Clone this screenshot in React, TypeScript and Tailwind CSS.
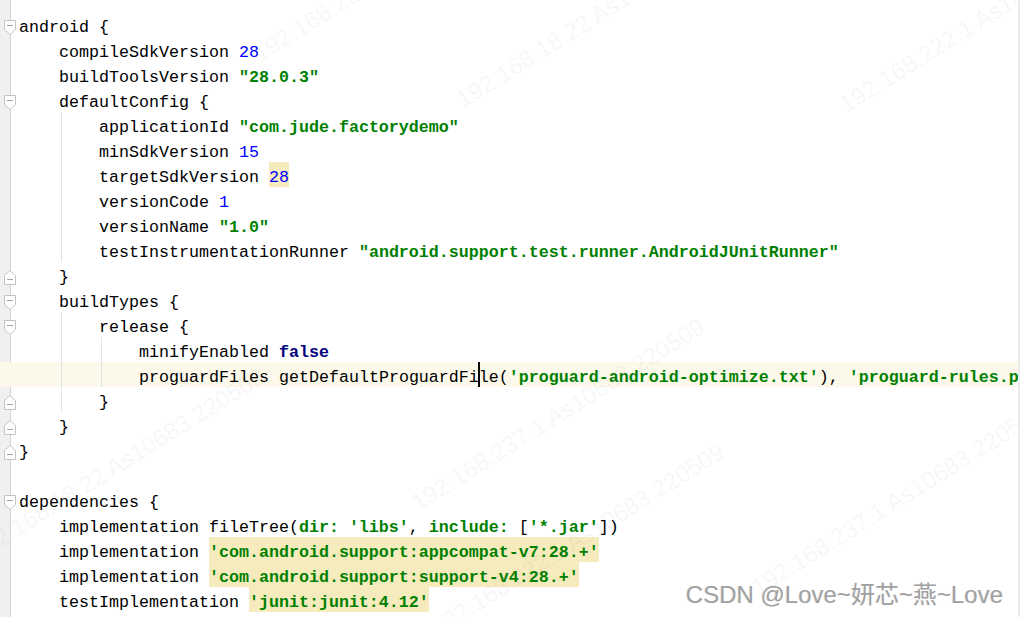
type Tok = { t: string; c?: string };

const ID = 'text-black';
const NUM = 'text-[#0000ff]';
const STR = 'text-[#008000] font-bold';
const KW = 'text-[#000080] font-bold';
const HL = 'bg-[#f6ebbd]';

type Line = {
    indent: number;
    guides?: number[];
    fold?: 'open' | 'close';
    current?: boolean;
    toks: Tok[];
};

const lines: Line[] = [
    { indent: 0, fold: 'open', toks: [{ t: 'android {' }] },
    { indent: 1, toks: [{ t: 'compileSdkVersion ' }, { t: '28', c: NUM }] },
    { indent: 1, toks: [{ t: 'buildToolsVersion ' }, { t: '"28.0.3"', c: STR }] },
    { indent: 1, fold: 'open', toks: [{ t: 'defaultConfig {' }] },
    { indent: 2, guides: [1], toks: [{ t: 'applicationId ' }, { t: '"com.jude.factorydemo"', c: STR }] },
    { indent: 2, guides: [1], toks: [{ t: 'minSdkVersion ' }, { t: '15', c: NUM }] },
    { indent: 2, guides: [1], toks: [{ t: 'targetSdkVersion ' }, { t: '28', c: `${NUM} ${HL}` }] },
    { indent: 2, guides: [1], toks: [{ t: 'versionCode ' }, { t: '1', c: NUM }] },
    { indent: 2, guides: [1], toks: [{ t: 'versionName ' }, { t: '"1.0"', c: STR }] },
    {
        indent: 2,
        guides: [1],
        toks: [{ t: 'testInstrumentationRunner ' }, { t: '"android.support.test.runner.AndroidJUnitRunner"', c: STR }],
    },
    { indent: 1, fold: 'close', toks: [{ t: '}' }] },
    { indent: 1, fold: 'open', toks: [{ t: 'buildTypes {' }] },
    { indent: 2, guides: [1], fold: 'open', toks: [{ t: 'release {' }] },
    { indent: 3, guides: [1, 2], toks: [{ t: 'minifyEnabled ' }, { t: 'false', c: KW }] },
    {
        indent: 3,
        guides: [1, 2],
        current: true,
        toks: [
            { t: 'proguardFiles getDefaultProguardFi' },
            { t: 'le(', c: `${ID} shadow-[-1px_0_0_#000,inset_1px_0_0_#000]` },
            { t: "'proguard-android-optimize.txt'", c: STR },
            { t: '), ' },
            { t: "'proguard-rules.pro'", c: STR },
        ],
    },
    { indent: 2, guides: [1], fold: 'close', toks: [{ t: '}' }] },
    { indent: 1, fold: 'close', toks: [{ t: '}' }] },
    { indent: 0, fold: 'close', toks: [{ t: '}' }] },
    { indent: 0, toks: [] },
    { indent: 0, fold: 'open', toks: [{ t: 'dependencies {' }] },
    {
        indent: 1,
        toks: [
            { t: 'implementation fileTree(' },
            { t: 'dir: ', c: STR },
            { t: "'libs'", c: STR },
            { t: ', ' },
            { t: 'include: ', c: STR },
            { t: '[' },
            { t: "'*.jar'", c: STR },
            { t: '])' },
        ],
    },
    { indent: 1, toks: [{ t: 'implementation ' }, { t: "'com.android.support:appcompat-v7:28.+'", c: `${STR} ${HL}` }] },
    { indent: 1, toks: [{ t: 'implementation ' }, { t: "'com.android.support:support-v4:28.+'", c: `${STR} ${HL}` }] },
    { indent: 1, toks: [{ t: 'testImplementation ' }, { t: "'junit:junit:4.12'", c: `${STR} ${HL}` }] },
];

const FoldMark = ({ kind }: { kind: 'open' | 'close' }) => (
    <svg width="12" height="15" viewBox="0 0 12 15" className="block">
        {kind === 'open' ? (
            <>
                <path d="M0.5 0.5H11.5V9.5L6 14.5L0.5 9.5Z" fill="#fff" stroke="#c4c4c4" />
                <path d="M3 5.5H9" stroke="#a8a8a8" />
            </>
        ) : (
            <>
                <path d="M0.5 14.5H11.5V5.5L6 0.5L0.5 5.5Z" fill="#fff" stroke="#c4c4c4" />
                <path d="M3 9.5H9" stroke="#a8a8a8" />
            </>
        )}
    </svg>
);

// faint diagonal watermarks over the editor
const marks: { x: number; y: number; s: string }[] = [
    { x: 262, y: 66, s: '192.168.237.1 As10683 220509' },
    { x: 465, y: 112, s: '192.168.18.22 As10683 220509' },
    { x: 848, y: 117, s: '192.168.222.1 As10683 220509' },
    { x: -20, y: 565, s: '192.168.18.22 As10683 220509' },
    { x: 420, y: 515, s: '192.168.237.1 As10683 220509' },
    { x: 440, y: 640, s: '192.168.222.1 As10683 220509' },
    { x: 760, y: 600, s: '192.168.237.1 As10683 220509' },
];

export default function App() {
    return (
        <div className="relative h-[617px] w-[1020px] overflow-hidden border-r-2 border-[#ebebeb] bg-white font-['Liberation_Mono',monospace] text-[16.67px]">
            <div className="flex h-full flex-col bg-[linear-gradient(to_right,#f0f0f0_10px,#d6d6d6_10px,#d6d6d6_11px,#fff_11px)] pt-[12px]">
                {lines.map((ln, i) => (
                    <div
                        key={i}
                        className={`flex h-[25px] shrink-0 items-stretch whitespace-pre ${ln.current ? 'bg-[#fcf9ea]' : ''}`}
                    >
                        <div className="w-[19px] shrink-0 pt-[8px] pl-[4px]">
                            {ln.fold && <FoldMark kind={ln.fold} />}
                        </div>
                        {Array.from({ length: ln.indent }).map((_, lvl) => (
                            <div key={lvl} className="w-[40px] shrink-0">
                                {ln.guides?.includes(lvl) && (
                                    <div className="ml-[2px] h-full w-px bg-[#e3e3e3]" />
                                )}
                            </div>
                        ))}
                        {ln.toks.map((tk, j) => (
                            <span key={j} className={`block shrink-0 pt-[7px] leading-[18px] ${tk.c ?? ID}`}>
                                {tk.t}
                            </span>
                        ))}
                    </div>
                ))}
            </div>

            {marks.map((m, i) => (
                <span
                    key={i}
                    className="pointer-events-none absolute origin-bottom-left rotate-[-32deg] font-['Liberation_Sans',Arial,sans-serif] text-[24px] leading-none whitespace-nowrap text-black/[0.05]"
                    style={{ left: m.x, top: m.y - 24 }}
                >
                    {m.s}
                </span>
            ))}

            <span className="absolute top-[583px] right-[15px] font-['Liberation_Sans','Noto_Sans_CJK_SC',sans-serif] text-[24px] leading-none whitespace-nowrap text-[#a0a0a0] [text-shadow:1px_1px_0_#fff,-1px_0_0_#e8e8e8]">
                CSDN @Love~妍芯~燕~Love
            </span>
        </div>
    );
}
